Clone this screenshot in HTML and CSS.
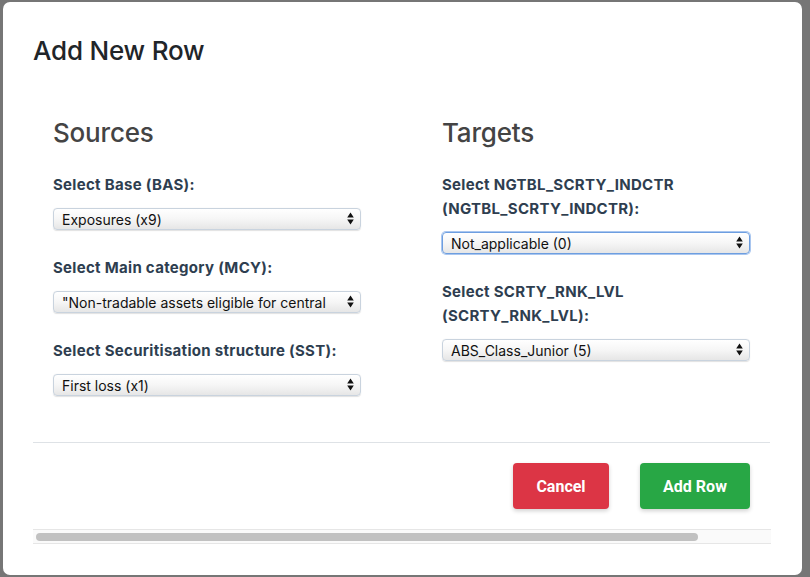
FILE: index.html
```html
<!DOCTYPE html>
<html lang="en">
<head>
<meta charset="utf-8">
<title>Add New Row</title>
<link rel="stylesheet" href="styles.css">
</head>
<body>
<div class="backdrop">
  <div class="modal">
    <h2 class="modal-title">Add New Row</h2>
    <div class="modal-body">
      <div class="col">
        <h3 class="col-title">Sources</h3>
        <div class="field">
          <label class="field-label">Select Base (BAS):</label>
          <div class="select-wrap">
            <select class="select"><option>Exposures (x9)</option></select>
            <svg class="arrows" width="7" height="13" viewBox="0 0 7 13"><path d="M3.5 0.5 L6.8 5.5 H0.2 Z M3.5 12.5 L6.8 7.5 H0.2 Z" fill="#111"/></svg>
          </div>
        </div>
        <div class="field">
          <label class="field-label">Select Main category (MCY):</label>
          <div class="select-wrap">
            <select class="select"><option>"Non-tradable assets eligible for central</option></select>
            <svg class="arrows" width="7" height="13" viewBox="0 0 7 13"><path d="M3.5 0.5 L6.8 5.5 H0.2 Z M3.5 12.5 L6.8 7.5 H0.2 Z" fill="#111"/></svg>
          </div>
        </div>
        <div class="field">
          <label class="field-label">Select Securitisation structure (SST):</label>
          <div class="select-wrap">
            <select class="select"><option>First loss (x1)</option></select>
            <svg class="arrows" width="7" height="13" viewBox="0 0 7 13"><path d="M3.5 0.5 L6.8 5.5 H0.2 Z M3.5 12.5 L6.8 7.5 H0.2 Z" fill="#111"/></svg>
          </div>
        </div>
      </div>
      <div class="col">
        <h3 class="col-title">Targets</h3>
        <div class="field">
          <label class="field-label">Select NGTBL_SCRTY_INDCTR (NGTBL_SCRTY_INDCTR):</label>
          <div class="select-wrap">
            <select class="select focused"><option>Not_applicable (0)</option></select>
            <svg class="arrows" width="7" height="13" viewBox="0 0 7 13"><path d="M3.5 0.5 L6.8 5.5 H0.2 Z M3.5 12.5 L6.8 7.5 H0.2 Z" fill="#111"/></svg>
          </div>
        </div>
        <div class="field">
          <label class="field-label">Select SCRTY_RNK_LVL (SCRTY_RNK_LVL):</label>
          <div class="select-wrap">
            <select class="select"><option>ABS_Class_Junior (5)</option></select>
            <svg class="arrows" width="7" height="13" viewBox="0 0 7 13"><path d="M3.5 0.5 L6.8 5.5 H0.2 Z M3.5 12.5 L6.8 7.5 H0.2 Z" fill="#111"/></svg>
          </div>
        </div>
      </div>
    </div>
    <div class="modal-footer">
      <button class="btn btn-cancel">Cancel</button>
      <button class="btn btn-add">Add Row</button>
    </div>
    <div class="hscroll"><div class="thumb"></div></div>
  </div>
</div>
</body>
</html>
```

FILE: styles.css
```css
* { box-sizing: border-box; }
html, body {
  margin: 0;
  padding: 0;
  width: 810px;
  height: 577px;
  overflow: hidden;
  background: #767676;
}
.backdrop {
  padding: 2px 8px 2px 3px;
}
.modal {
  width: 799px;
  height: 573px;
  background: #fff;
  border-radius: 7px;
  padding: 33px 32px 0 30px;
  font-family: Inter, "Noto Sans", sans-serif;
}
.modal-title {
  margin: 0;
  font-size: 26px;
  line-height: 32px;
  font-weight: 500;
  color: #212529;
  letter-spacing: -0.2px;
}
.modal-body {
  display: grid;
  grid-template-columns: 308px 308px;
  column-gap: 81px;
  padding: 50px 20px 20px 20px;
  border-bottom: 1px solid #dee2e6;
  height: 376px;
}
.col-title {
  margin: 0 0 24px 0;
  font-size: 26px;
  line-height: 32px;
  font-weight: 500;
  color: #444;
  letter-spacing: -0.2px;
}
.field {
  margin-bottom: 26px;
}
.field-label {
  display: block;
  font-size: 15px;
  line-height: 24px;
  font-weight: 700;
  color: #2e3e50;
  margin-bottom: 11px;
  letter-spacing: 0.3px;
}
.select-wrap {
  position: relative;
  height: 22px;
}
.select {
  -webkit-appearance: none;
  appearance: none;
  width: 100%;
  height: 22px;
  margin: 0;
  padding: 0 24px 0 8px;
  border: 1px solid #c9d3de;
  border-radius: 4px;
  background: linear-gradient(#ffffff 0%, #f6f6f6 50%, #e6e6e6 100%);
  font-family: Inter, "Noto Sans", sans-serif;
  font-size: 14px;
  color: #111;
  box-shadow: 0 0.5px 1px rgba(0,0,0,0.12);
}
.select.focused {
  border: 1px solid #6d9ee0;
  box-shadow: 0 0 0 1px #a9c6ef;
}
.arrows {
  position: absolute;
  right: 7px;
  top: 4px;
}
.modal-footer {
  display: flex;
  justify-content: flex-end;
  gap: 31px;
  padding: 20px 20px 0 0;
  height: 86px;
}
.btn {
  height: 46px;
  padding: 0 23px;
  border: none;
  border-radius: 4px;
  color: #fff;
  font-family: Roboto, "Liberation Sans", sans-serif;
  font-size: 16px;
  font-weight: 700;
  box-shadow: 0 2px 4px rgba(0,0,0,0.18);
}
.btn-cancel { background: #dc3545; width: 96px; }
.btn-add { background: #28a745; width: 110px; }
.hscroll {
  height: 15px;
  background: #fafafa;
  border-top: 1px solid #e6e6e6;
  border-bottom: 1px solid #e6e6e6;
  padding: 3px 0 0 3px;
  width: 738px;
}
.thumb {
  width: 662px;
  height: 8px;
  border-radius: 4px;
  background: #c1c1c1;
}
```
